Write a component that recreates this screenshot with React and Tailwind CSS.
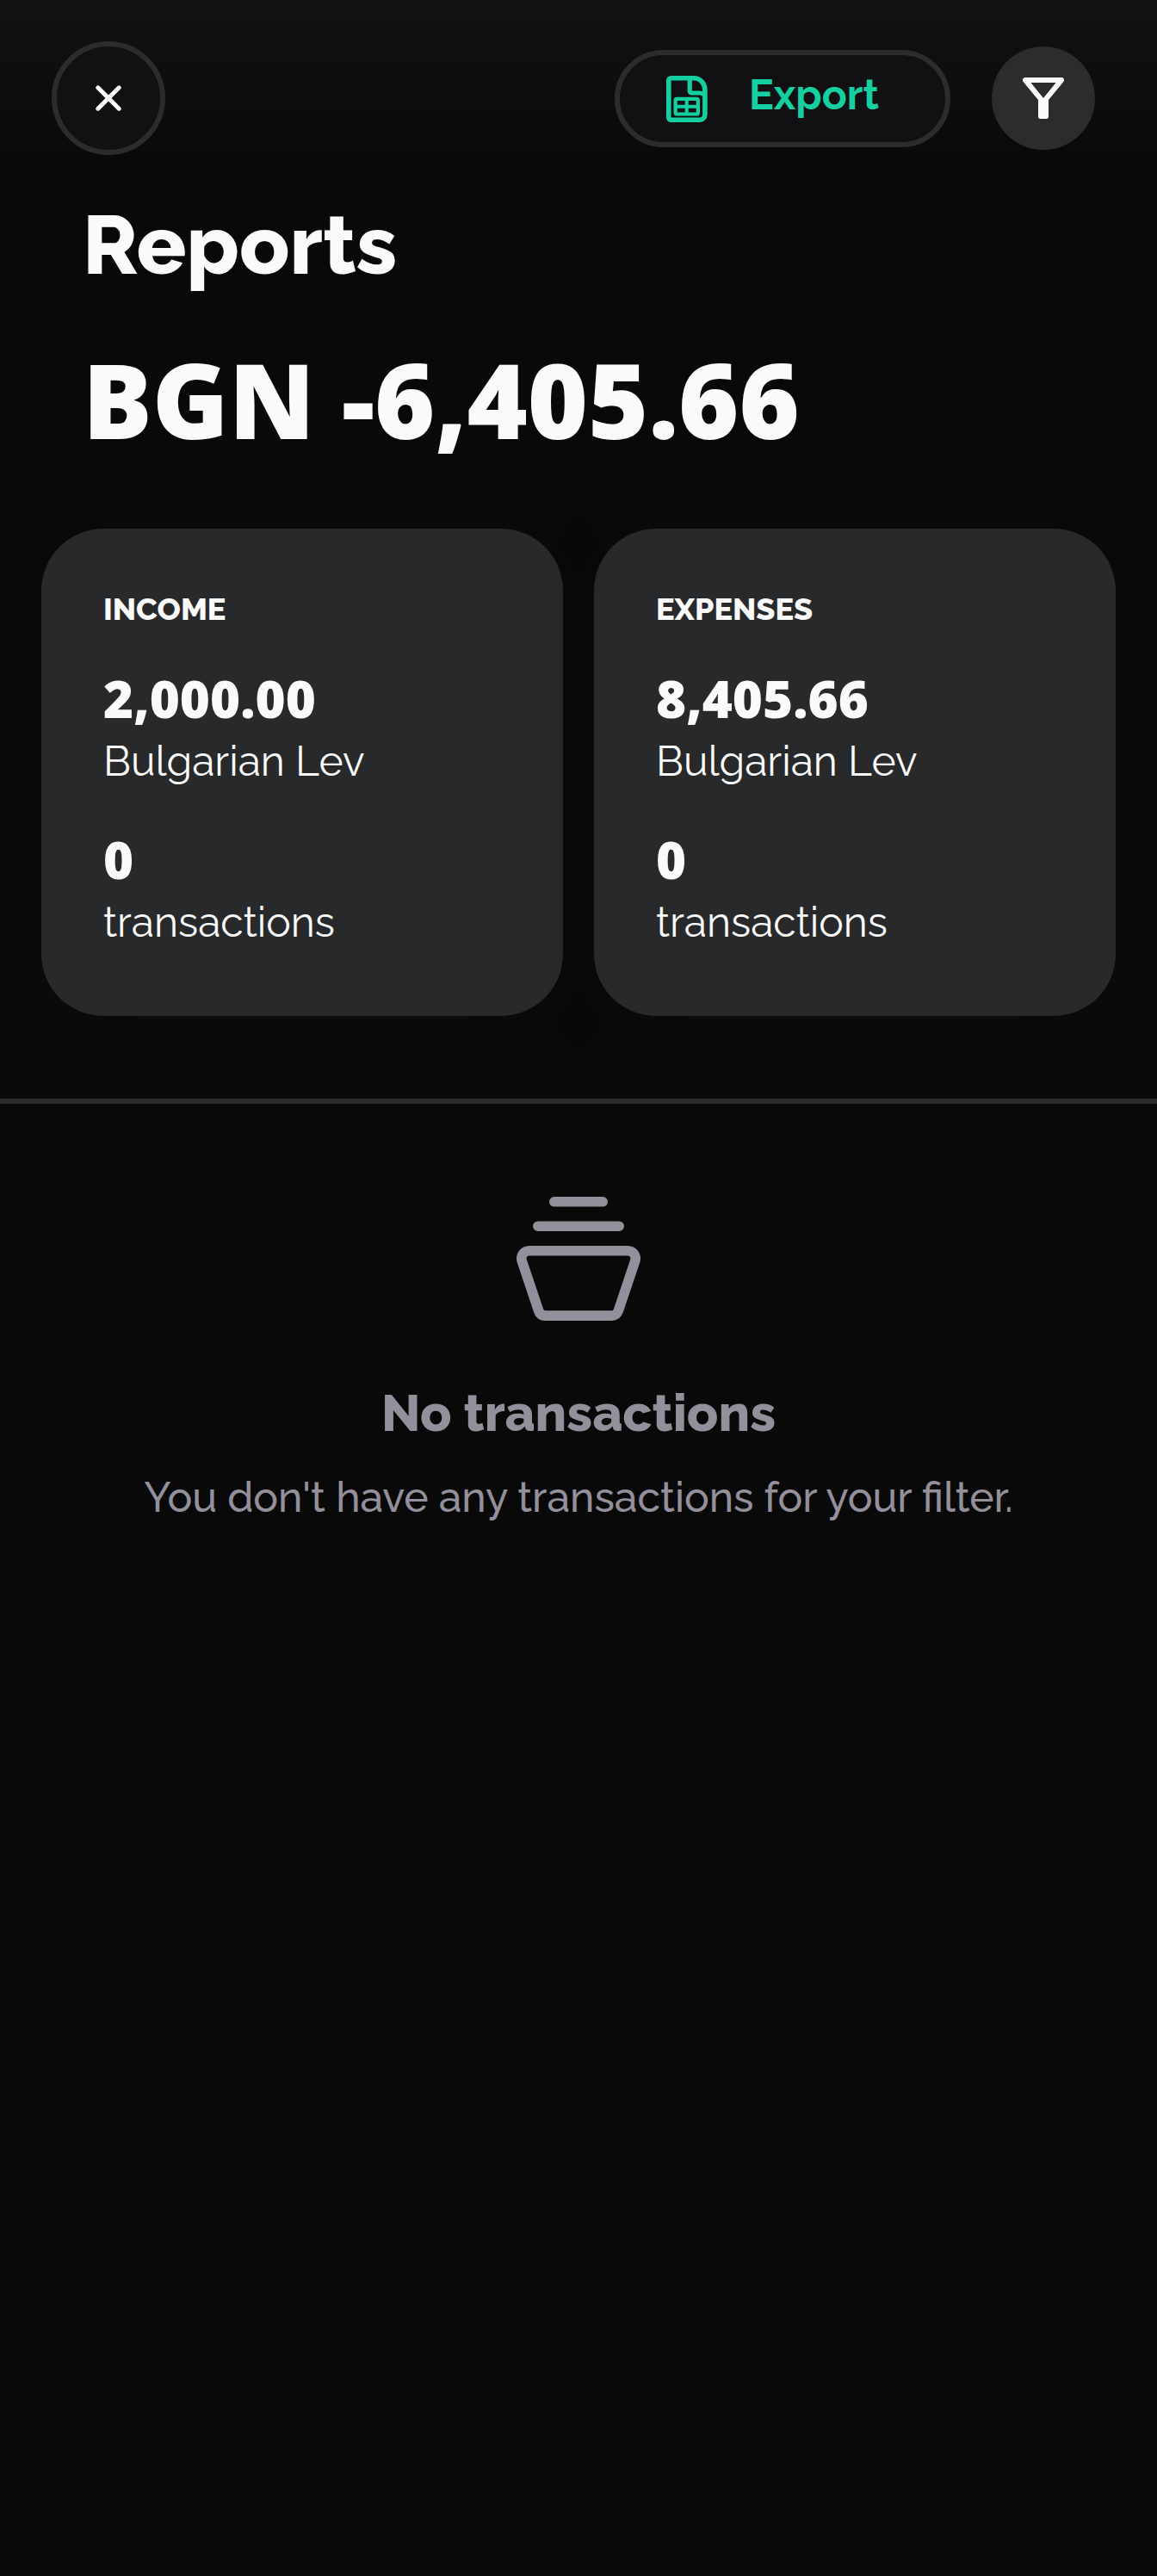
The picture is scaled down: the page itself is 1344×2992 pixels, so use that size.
import React from "react";

function CloseIcon() {
  return (
    <svg className="size-[30px]" viewBox="0 0 30 30" fill="none" stroke="currentColor" strokeWidth="5" strokeLinecap="round">
      <path d="M2.8 2.8 27.2 27.2M27.2 2.8 2.8 27.2" />
    </svg>
  );
}

function SheetIcon() {
  return (
    <svg className="h-[54px] w-12" viewBox="0 0 48 54" fill="none" stroke="currentColor" strokeWidth="5.6" strokeLinejoin="round">
      <path d="M5.6 2.8H32C39.5 2.8 44.9 9 44.9 16.5V45C44.9 48.5 42 51.2 38.5 51.2H5.6C4 51.2 2.8 50 2.8 48.4V5.6C2.8 4 4 2.8 5.6 2.8Z" />
      <path d="M27.2 3V17.5C27.2 19 28.3 20 29.8 20H38.5C42 20 44.8 22 44.8 25.5" strokeWidth="5.2" />
      <rect x="10.6" y="26.9" width="26.3" height="17.6" rx="1.8" strokeWidth="4.2" />
      <path d="M23.7 26v19M10 35.8h27" strokeWidth="4" />
    </svg>
  );
}

function FilterIcon() {
  return (
    <svg className="size-12" viewBox="0 0 48 48" fill="none" stroke="currentColor" strokeLinejoin="round">
      <path d="M3 3H45L24 28.6Z" strokeWidth="6" />
      <path d="M18 26h12v19.6c0 1.6-.8 2.4-2.4 2.4h-7.2c-1.6 0-2.4-.8-2.4-2.4Z" fill="currentColor" stroke="none" />
    </svg>
  );
}

function BasketIcon() {
  return (
    <svg className="size-36" viewBox="0 0 144 144" fill="none" stroke="currentColor" strokeWidth="11.6" strokeLinecap="round">
      <path d="M43.8 5.8H100.2M24.8 34.2H119.2" />
      <path strokeLinejoin="round" d="M15 62.7H129C135.5 62.7 139.7 68.5 137.7 74.6L118.3 132.5C117 136.3 114.5 138.1 110.5 138.1H33.5C29.5 138.1 27 136.3 25.7 132.5L6.3 74.6C4.3 68.5 8.5 62.7 15 62.7Z" />
    </svg>
  );
}

function StatCard({ label, amount, currency, count }) {
  return (
    <section className="h-[566px] flex-1 rounded-[72px] bg-[#28292b] px-[72px] pt-[75px] shadow-[0_12px_72px_rgba(40,41,43,0.12)]">
      <h2 className="text-[36px] leading-[36px] font-extrabold">{label}</h2>
      <p className="mt-14 font-['Open_Sans',sans-serif] text-[60px] leading-[60px] font-extrabold">{amount}</p>
      <p className="mt-[19px] text-5xl leading-[48px]">{currency}</p>
      <p className="mt-[60px] font-['Open_Sans',sans-serif] text-[60px] leading-[60px] font-extrabold">{count}</p>
      <p className="mt-[19px] text-5xl leading-[48px]">transactions</p>
    </section>
  );
}

export default function App() {
  return (
    <div className="h-[2992px] w-[1344px] overflow-hidden bg-[#090909] font-['Raleway','Lato',sans-serif] text-[#fafafa]">
      <div className="h-[1276px] bg-[linear-gradient(to_bottom,#121214_0,#090909_200px)]">
        <header className="flex h-[228px] items-start pr-[72px] pl-[60px] pt-12">
          <button className="flex size-[132px] items-center justify-center rounded-full border-6 border-[#2b2c2e] bg-[#111113]">
            <CloseIcon />
          </button>
          <button className="mt-2.5 ml-auto flex h-[113px] w-[390px] items-center rounded-full border-6 border-[#2b2c2e] bg-[#111113] pl-[54px] text-[#16cfa0]">
            <SheetIcon />
            <span className="ml-12 pb-[9px] text-5xl leading-[48px] font-bold">Export</span>
          </button>
          <button className="mt-1.5 ml-12 flex size-[120px] items-center justify-center rounded-full bg-[#2b2c2e]">
            <FilterIcon />
          </button>
        </header>
        <div className="px-24 pt-2">
          <h1 className="text-8xl leading-[96px] font-extrabold">Reports</h1>
          <p className="mt-[72px] font-['Open_Sans',sans-serif] text-[120px] leading-[120px] font-extrabold">BGN -6,405.66</p>
        </div>
        <div className="mt-[90px] flex gap-9 px-12">
          <StatCard label="INCOME" amount="2,000.00" currency="Bulgarian Lev" count="0" />
          <StatCard label="EXPENSES" amount="8,405.66" currency="Bulgarian Lev" count="0" />
        </div>
      </div>
      <div className="h-1.5 bg-[#2b2b2c]" />
      <div className="flex flex-col items-center pt-[108px] text-[#94909b]">
        <BasketIcon />
        <h3 className="mt-[77px] text-6xl leading-[60px] font-extrabold">No transactions</h3>
        <p className="mt-11 text-5xl leading-[48px] font-medium">You don't have any transactions for your filter.</p>
      </div>
    </div>
  );
}
